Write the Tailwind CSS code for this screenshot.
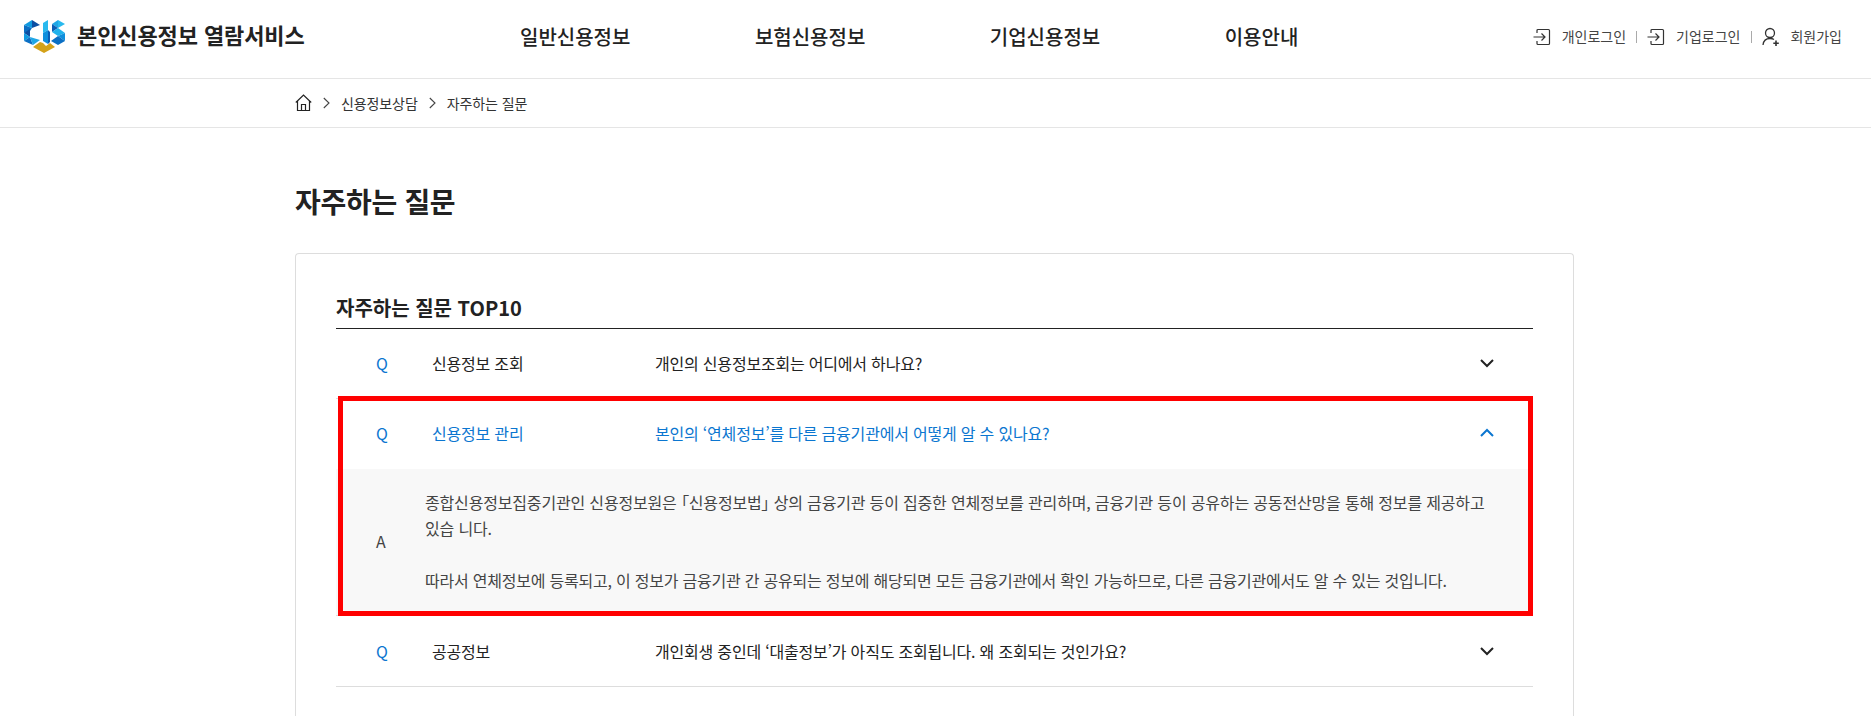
<!DOCTYPE html>
<html lang="ko">
<head>
    <meta charset="UTF-8">
    <meta name="viewport" content="width=device-width, initial-scale=1.0">
    <title>자주하는 질문 - 본인신용정보 열람서비스</title>
    <script src="https://cdn.jsdelivr.net/npm/@tailwindcss/browser@4"></script>
</head>
<body class="relative h-[716px] overflow-hidden bg-white text-[#222] font-['Noto_Sans_CJK_KR','Noto_Sans',sans-serif]">

    <!-- Header -->
    <header class="flex h-[79px] items-center border-b border-[#e5e5e5] pb-[5px] pl-[24px] pr-[29px]">
        <div class="flex w-[496px] items-center gap-[12px]">
            <svg class="h-[33px] w-[41px]" viewBox="0 0 41 33">
                <!-- C -->
                <polygon points="0,5 8,0 8,8" fill="#0f9ae0"/>
                <polygon points="8,0 16,5 8,8" fill="#0b4ea2"/>
                <polygon points="0,5 8,8 6,11 0,13" fill="#0b6fc4"/>
                <polygon points="0,13 6,9 6,17" fill="#0b4ea2"/>
                <polygon points="0,13 6,17 0,21" fill="#0f9ae0"/>
                <polygon points="0,21 6,17 9,25" fill="#0b6fc4"/>
                <polygon points="6,17 16,20 9,25" fill="#1fa7e6"/>
                <!-- I -->
                <polygon points="19,3 24,0 24,10 19,13" fill="#29b9ee"/>
                <polygon points="19,13 24,10 24,24 19,21" fill="#0f8fdc"/>
                <polygon points="24,10 26,12 26,22 24,24" fill="#0b5db4"/>
                <!-- S -->
                <polygon points="28,4 34,0 34,8" fill="#1fa7e6"/>
                <polygon points="34,0 41,4 34,8" fill="#29b9ee"/>
                <polygon points="28,4 34,8 28,12" fill="#0b5db4"/>
                <polygon points="28,12 34,8 41,13 34,16" fill="#1fb2ec"/>
                <polygon points="34,16 41,13 41,21" fill="#0f8fdc"/>
                <polygon points="27,21 34,16 41,21 34,25" fill="#0b6fc4"/>
                <!-- gold base -->
                <polygon points="9,27 16,22 19,23 22,26 26,23 31,27 20,33" fill="#d4a21a"/>
            </svg>
            <span class="-mt-[5px] text-[22px] font-bold leading-none tracking-[-0.1px] text-[#222]">본인신용정보 열람서비스</span>
        </div>
        <nav class="flex gap-[124.5px] text-[20px] font-medium text-[#222]">
            <a>일반신용정보</a>
            <a>보험신용정보</a>
            <a>기업신용정보</a>
            <a>이용안내</a>
        </nav>
        <div class="ml-auto flex items-center text-[14px] text-[#444]">
            <svg class="mr-[11px] h-[18px] w-[18px]" viewBox="0 0 18 18" fill="none" stroke="#333" stroke-width="1.2">
                <path d="M4 5V2.5A1 1 0 0 1 5 1.5H15.5A1 1 0 0 1 16.5 2.5V15.5A1 1 0 0 1 15.5 16.5H5A1 1 0 0 1 4 15.5V13"/>
                <path d="M0.5 9H11.5M8.5 5.5L12 9L8.5 12.5"/>
            </svg>
            <a>개인로그인</a>
            <span class="mx-[10px] h-[12px] w-px bg-[#aaa]"></span>
            <svg class="mr-[11px] h-[18px] w-[18px]" viewBox="0 0 18 18" fill="none" stroke="#333" stroke-width="1.2">
                <path d="M4 5V2.5A1 1 0 0 1 5 1.5H15.5A1 1 0 0 1 16.5 2.5V15.5A1 1 0 0 1 15.5 16.5H5A1 1 0 0 1 4 15.5V13"/>
                <path d="M0.5 9H11.5M8.5 5.5L12 9L8.5 12.5"/>
            </svg>
            <a>기업로그인</a>
            <span class="mx-[10.5px] h-[12px] w-px bg-[#aaa]"></span>
            <svg class="mr-[10px] h-[20px] w-[18px]" viewBox="0 0 18 20" fill="none" stroke="#333" stroke-width="1.3">
                <circle cx="8" cy="6" r="4.5"/>
                <path d="M1 18C1.5 13.5 4 11.5 8 11.5C9.5 11.5 11 11.8 12 12.5"/>
                <path d="M14 13.5V19M11.3 16.3H16.8" stroke-width="1.6"/>
            </svg>
            <a>회원가입</a>
        </div>
    </header>

    <!-- Breadcrumb -->
    <div class="h-[49px] border-b border-[#e5e5e5]">
        <div class="ml-[295px] flex h-full w-[1279px] items-center text-[14px] tracking-[-0.1px] text-[#333]">
            <svg class="h-[18px] w-[17px]" viewBox="0 0 17 18" fill="none" stroke="#222" stroke-width="1.2">
                <path d="M0.8 8.5L8.5 1L16.2 8.5"/>
                <path d="M2.5 7V16.5H14.5V7"/>
                <path d="M6.5 16.5V10.5H10.5V16.5"/>
            </svg>
            <svg class="mx-[11px] h-[12px] w-[7px]" viewBox="0 0 7 12" fill="none" stroke="#444" stroke-width="1.1"><path d="M0.8 1L6 6L0.8 11"/></svg>
            <span>신용정보상담</span>
            <svg class="mx-[11px] h-[12px] w-[7px]" viewBox="0 0 7 12" fill="none" stroke="#444" stroke-width="1.1"><path d="M0.8 1L6 6L0.8 11"/></svg>
            <span>자주하는 질문</span>
        </div>
    </div>

    <main class="ml-[295px] w-[1279px]">
        <h1 class="mt-[51px] text-[28px] font-bold leading-[44px] tracking-[-0.3px] text-[#222]">자주하는 질문</h1>

        <section class="mt-[30px] h-[463px] rounded-t-[4px] border border-b-0 border-[#ddd] px-[40px] pt-[37px]">
            <h2 class="border-b border-[#222] pb-[4px] text-[20px] font-bold leading-[33px] text-[#222]">자주하는 질문 TOP10</h2>

            <!-- Row 1 -->
            <div class="flex h-[70px] items-center border-b border-[#ddd] pb-[2px] text-[16px] tracking-[-0.2px] text-[#222]">
                <span class="w-[96px] pl-[40px] text-[#0b76d0]">Q</span>
                <span class="w-[223px]">신용정보 조회</span>
                <span class="flex-1">개인의 신용정보조회는 어디에서 하나요?</span>
                <svg class="mr-[39px] h-[10px] w-[14px]" viewBox="0 0 14 10" fill="none" stroke="#222" stroke-width="2"><path d="M1 2L7 8L13 2"/></svg>
            </div>

            <!-- Row 2, open -->
            <div class="flex h-[70px] items-center pb-[2px] text-[16px] tracking-[-0.2px] text-[#0b76d0]">
                <span class="w-[96px] pl-[40px]">Q</span>
                <span class="w-[223px]">신용정보 관리</span>
                <span class="flex-1">본인의 ‘연체정보’를 다른 금융기관에서 어떻게 알 수 있나요?</span>
                <svg class="mr-[39px] h-[10px] w-[14px]" viewBox="0 0 14 10" fill="none" stroke="#0b76d0" stroke-width="2"><path d="M1 8L7 2L13 8"/></svg>
            </div>
            <div class="flex items-center border-b border-[#ddd] bg-[#f8f8f8] pb-[22px] pt-[20px] text-[16px] leading-[26px] text-[#444]">
                <span class="w-[89px] shrink-0 pl-[40px]">A</span>
                <div class="w-[1068px]">
                    <p class="[font-feature-settings:'palt'] tracking-[-0.17px]">종합신용정보집중기관인 신용정보원은 「신용정보법」 상의 금융기관 등이 집중한 연체정보를 관리하며, 금융기관 등이 공유하는 공동전산망을 통해 정보를 제공하고 있습 니다.</p>
                    <p class="mt-[26px] tracking-[-0.22px]">따라서 연체정보에 등록되고, 이 정보가 금융기관 간 공유되는 정보에 해당되면 모든 금융기관에서 확인 가능하므로, 다른 금융기관에서도 알 수 있는 것입니다.</p>
                </div>
            </div>

            <!-- Row 3 -->
            <div class="flex h-[71px] items-center border-b border-[#ddd] pb-[1px] text-[16px] tracking-[-0.2px] text-[#222]">
                <span class="w-[96px] pl-[40px] text-[#0b76d0]">Q</span>
                <span class="w-[223px]">공공정보</span>
                <span class="flex-1">개인회생 중인데 ‘대출정보’가 아직도 조회됩니다. 왜 조회되는 것인가요?</span>
                <svg class="mr-[39px] h-[10px] w-[14px]" viewBox="0 0 14 10" fill="none" stroke="#222" stroke-width="2"><path d="M1 2L7 8L13 2"/></svg>
            </div>
        </section>
    </main>

    <!-- Red highlight lying over the open row -->
    <div class="absolute left-[338px] top-[396px] h-[220px] w-[1195px] border-[5px] border-[#ff0000]"></div>

</body>
</html>
